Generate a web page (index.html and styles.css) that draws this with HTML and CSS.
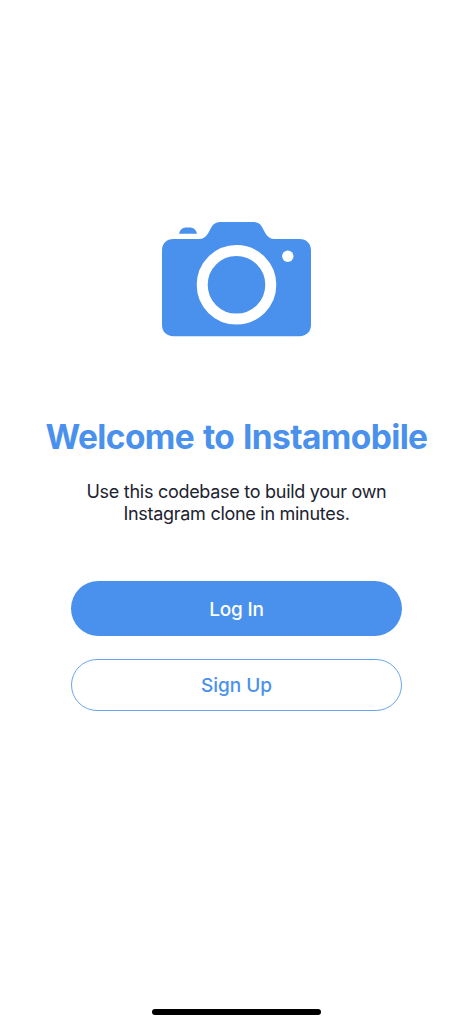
FILE: index.html
```html
<!DOCTYPE html>
<html lang="en">
<head>
<meta charset="utf-8">
<title>Instamobile</title>
<link rel="stylesheet" href="styles.css">
</head>
<body>
<main class="screen">
  <svg class="logo" viewBox="0 0 149 116" aria-hidden="true">
    <path class="ink" d="M11.500 18H37C41 18 44 16 46 12.500L49.500 6C51.500 2.500 54.500 1 58.500 1H91C95 1 98 2.500 100 6L103.500 12.500C105.500 16 108.500 18 112.500 18H137.500C144.500 18 149 22.500 149 29.500V104C149 110.500 144.500 115.200 137.500 115.200H11.500C4.500 115.200 0 110.500 0 104V29.500C0 22.500 4.500 18 11.500 18Z"/>
    <path class="ink" d="M17 12.700C18 8.500 20.500 6.500 24.500 6.500H27.500C31.500 6.500 34 8.500 35 12.700Z"/>
    <circle class="ring" cx="74.500" cy="63.800" r="34.300"/>
    <circle class="flash" cx="125.800" cy="35.300" r="5.700"/>
  </svg>
  <h1 class="title">Welcome to Instamobile</h1>
  <p class="subtitle"><span class="line">Use this codebase to build your own</span><span class="line">Instagram clone in minutes.</span></p>
  <div class="actions">
    <button class="button login">Log In</button>
    <button class="button signup">Sign Up</button>
  </div>
  <div class="home-indicator"></div>
</main>
</body>
</html>
```

FILE: styles.css
```css
* { box-sizing: border-box; }
body { margin: 0; background: #fff; font-family: Inter, "Liberation Sans", sans-serif; }
.screen { display: flex; flex-direction: column; align-items: center; height: 1024px; padding: 221px 0 9px; }
.logo { display: block; width: 149px; height: 116px; flex: none; }
.ink { fill: #4a91ed; }
.ring { fill: none; stroke: #fff; stroke-width: 11; }
.flash { fill: #fff; }
.title { margin: 79px 0 0; color: #4a91ed; font-size: 33.5px; line-height: 42px; font-weight: 700; letter-spacing: -0.62px; word-spacing: 1.5px; white-space: nowrap; }
.subtitle { margin: 23px 0 0; color: #202230; font-size: 18px; line-height: 22px; letter-spacing: -0.28px; text-align: center; }
.line { display: block; white-space: nowrap; }
.actions { display: flex; flex-direction: column; gap: 23px; width: 331px; margin-top: 56px; }
.button { padding: 0; border: 0; font-family: inherit; font-size: 19px; font-weight: 500; }
.login { height: 55px; padding-top: 1px; border-radius: 28px; background: #4a91ed; color: #fff; letter-spacing: -0.2px; }
.signup { height: 52px; border: 1px solid #6aa5f0; border-radius: 26px; background: #fff; color: #4a91ed; }
.home-indicator { width: 169px; height: 6px; margin-top: auto; border-radius: 3px; background: #000; }
```
